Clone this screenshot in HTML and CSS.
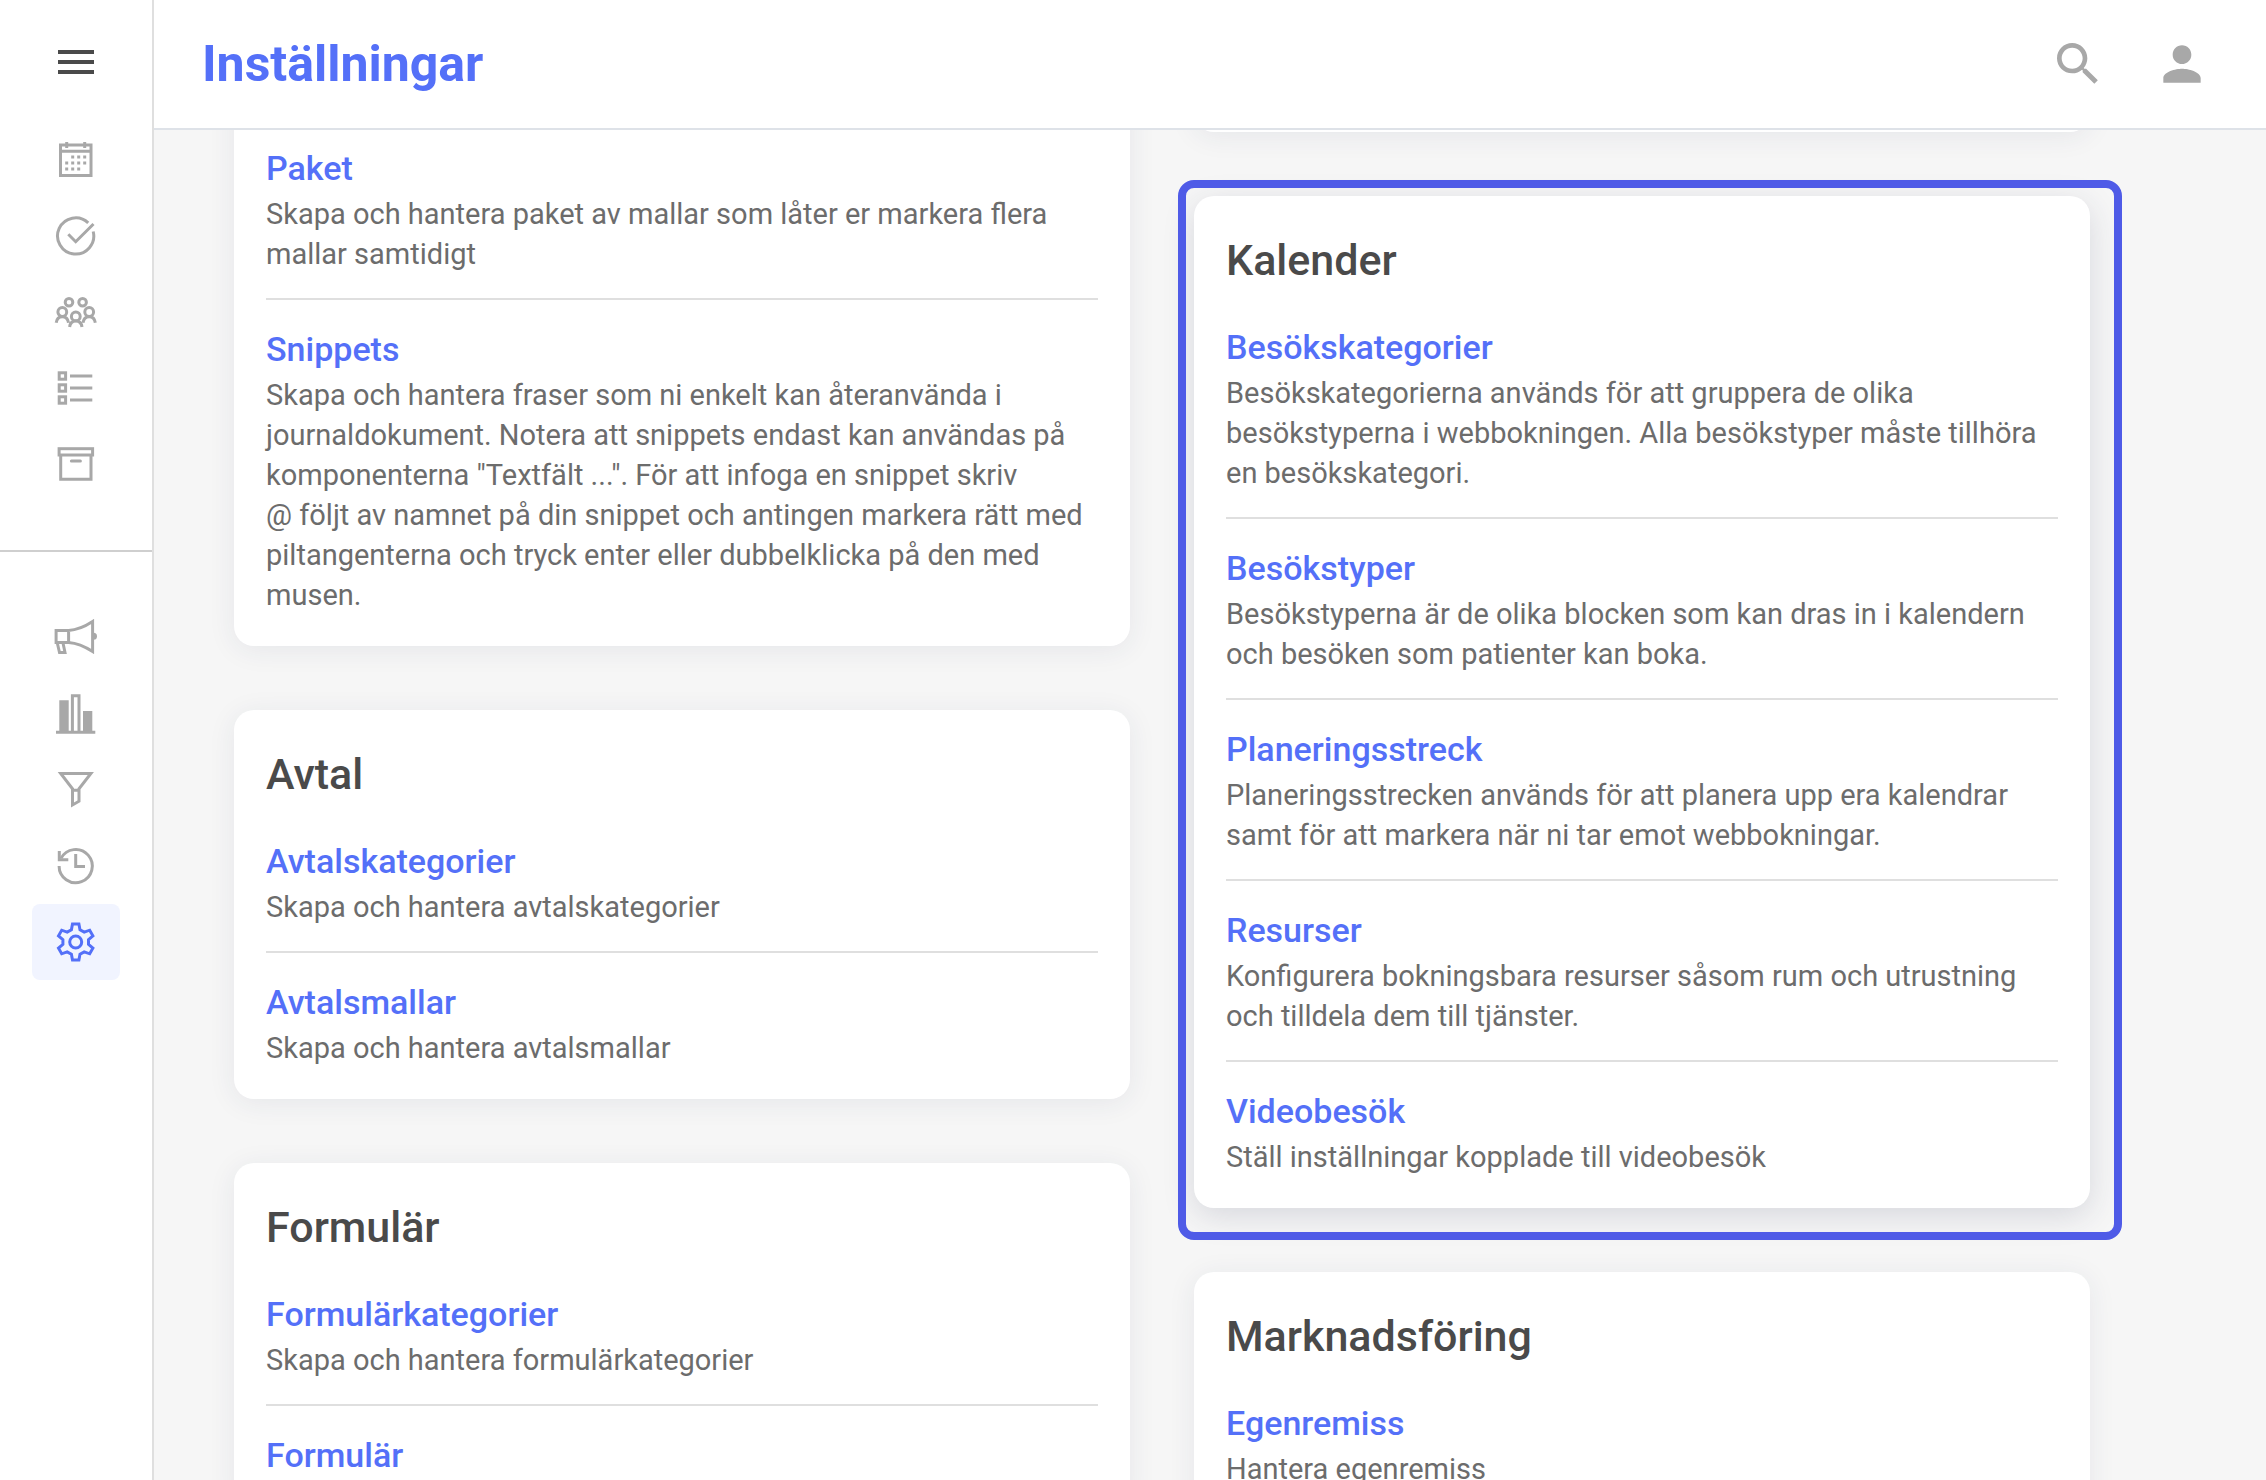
FILE: index.html
```html
<!DOCTYPE html>
<html lang="sv">
<head>
  <meta charset="UTF-8">
  <meta name="viewport" content="width=device-width, initial-scale=1">
  <title>Inställningar</title>
  <link rel="stylesheet" href="styles.css">
</head>
<body>
  <nav class="sidebar">
    <button class="menu-button" type="button" aria-label="Meny">
      <svg class="icon" viewBox="0 0 24 24"><path fill="currentColor" d="M3 18h18v-2H3v2zm0-5h18v-2H3v2zm0-7v2h18V6H3z"/></svg>
    </button>

    <div class="nav-group">
      <a class="nav-item" href="#" aria-label="Kalender">
        <svg class="icon line" viewBox="0 0 48 48">
          <rect x="8.5" y="9" width="30.5" height="30.5"/>
          <path d="M8.5 15.2H39M14.7 6v6M32.7 6v6"/>
          <path stroke-dasharray="3 3" d="M19.2 21h15M13.2 27h21M13.2 33h15"/>
        </svg>
      </a>
      <a class="nav-item" href="#" aria-label="Uppgifter">
        <svg class="icon line" viewBox="0 0 48 48">
          <path d="M36.2 10.9A18.1 18.1 0 1 0 41.2 19.5"/>
          <path d="M16.3 22.3l7.4 7.4L41.5 12"/>
        </svg>
      </a>
      <a class="nav-item" href="#" aria-label="Patienter">
        <svg class="icon line" viewBox="0 0 48 48">
          <circle cx="17" cy="14.3" r="3.8"/>
          <circle cx="30.6" cy="14.3" r="3.8"/>
          <circle cx="10.3" cy="24" r="4.4"/>
          <circle cx="37.2" cy="24" r="4.4"/>
          <circle cx="23.8" cy="28.4" r="4.4"/>
          <path d="M4.2 34.7c.5-3.7 2.8-6 6.1-6s5.7 2.3 6.2 6M31 34.7c.5-3.7 2.9-6 6.2-6s5.6 2.3 6.1 6M17.6 39c.5-3.7 2.9-6 6.2-6s5.7 2.3 6.2 6"/>
        </svg>
      </a>
      <a class="nav-item" href="#" aria-label="Listor">
        <svg class="icon line" viewBox="0 0 48 48">
          <rect x="7.2" y="8.8" width="6.4" height="6.4"/>
          <rect x="7.2" y="20.8" width="6.4" height="6.4"/>
          <rect x="7.2" y="32.8" width="6.4" height="6.4"/>
          <path d="M18 12h22.3M18 24h22.3M18 36h22.3"/>
        </svg>
      </a>
      <a class="nav-item" href="#" aria-label="Arkiv">
        <svg class="icon line" viewBox="0 0 48 48">
          <rect x="7.1" y="8.7" width="33.5" height="6.3"/>
          <path d="M8.7 15v24.3H39V15"/>
          <path stroke-linecap="round" d="M19.4 21h9"/>
        </svg>
      </a>
    </div>

    <div class="nav-group nav-group-bottom">
      <a class="nav-item" href="#" aria-label="Marknadsföring">
        <svg class="icon line" viewBox="0 0 48 48">
          <path d="M4.1 16.4h12.5v12H4.1zM16.6 16.4C25 16 33 12.5 40.6 7.5v30C33 32.5 25 29 16.6 28.4M5.3 29l2.2 9.5h5.5L11 29"/>
          <path class="solid" d="M41.5 18.8a3.5 3.5 0 0 1 0 7z"/>
        </svg>
      </a>
      <a class="nav-item" href="#" aria-label="Statistik">
        <svg class="icon line" viewBox="0 0 48 48">
          <path class="solid" d="M7.3 10.3h9.4V42H7.3zM31 21h9.3v21H31z"/>
          <path d="M20.4 42V5.7H27V42M4 42.2h39.3"/>
        </svg>
      </a>
      <a class="nav-item" href="#" aria-label="Filter">
        <svg class="icon line" viewBox="0 0 48 48">
          <path d="M8.7 7.4h30.2L27 22.8v12.4L20.5 39V22.8L8.7 7.4zM20.5 24.3H27"/>
        </svg>
      </a>
      <a class="nav-item" href="#" aria-label="Historik">
        <svg class="icon line" viewBox="0 0 48 48">
          <path d="M7.1 24A16.6 16.6 0 1 0 9 16.4"/>
          <path d="M7.3 9v8.7h9M23.7 12v12.5H33"/>
        </svg>
      </a>
      <a class="nav-item active" href="#" aria-label="Inställningar">
        <svg class="icon line" viewBox="0 0 48 48">
          <path transform="translate(23.7 24)" d="M-3.2-18H3.2L4.3-12.3 8.5-9.9 14-11.8 17.2-6.2 12.8-2.4V2.4L17.2 6.2 14 11.8 8.5 9.9 4.3 12.3 3.2 18H-3.2L-4.3 12.3-8.5 9.9-14 11.8-17.2 6.2-12.8 2.4V-2.4L-17.2-6.2-14-11.8-8.5-9.9-4.3-12.3z"/>
          <circle cx="23.7" cy="24" r="6"/>
        </svg>
      </a>
    </div>
  </nav>

  <div class="page">
    <header class="topbar">
      <h1>Inställningar</h1>
      <div class="topbar-actions">
        <button type="button" aria-label="Sök">
          <svg viewBox="0 0 24 24"><path fill="currentColor" d="M15.5 14h-.79l-.28-.27C15.41 12.59 16 11.11 16 9.5 16 5.91 13.09 3 9.5 3S3 5.91 3 9.5 5.91 16 9.5 16c1.61 0 3.09-.59 4.23-1.57l.27.28v.79l5 4.99L20.49 19l-4.99-5zm-6 0C7.01 14 5 11.99 5 9.5S7.01 5 9.5 5 14 7.01 14 9.5 11.99 14 9.5 14z"/></svg>
        </button>
        <button type="button" aria-label="Konto">
          <svg viewBox="0 0 24 24"><path fill="currentColor" d="M12 12c2.21 0 4-1.79 4-4s-1.79-4-4-4-4 1.79-4 4 1.79 4 4 4zm0 2c-2.67 0-8 1.34-8 4v2h16v-2c0-2.66-5.33-4-8-4z"/></svg>
        </button>
      </div>
    </header>

    <main class="content">
      <div class="columns">
        <div class="column">
          <section class="card">
            <div class="entry">
              <a href="#">Paket</a>
              <p>Skapa och hantera paket av mallar som låter er markera flera<br>mallar samtidigt</p>
            </div>
            <div class="entry">
              <a href="#">Snippets</a>
              <p>Skapa och hantera fraser som ni enkelt kan återanvända i<br>journaldokument. Notera att snippets endast kan användas på<br>komponenterna "Textfält ...". För att infoga en snippet skriv<br>@ följt av namnet på din snippet och antingen markera rätt med<br>piltangenterna och tryck enter eller dubbelklicka på den med<br>musen.</p>
            </div>
          </section>

          <section class="card">
            <h2>Avtal</h2>
            <div class="entry">
              <a href="#">Avtalskategorier</a>
              <p>Skapa och hantera avtalskategorier</p>
            </div>
            <div class="entry">
              <a href="#">Avtalsmallar</a>
              <p>Skapa och hantera avtalsmallar</p>
            </div>
          </section>

          <section class="card">
            <h2>Formulär</h2>
            <div class="entry">
              <a href="#">Formulärkategorier</a>
              <p>Skapa och hantera formulärkategorier</p>
            </div>
            <div class="entry">
              <a href="#">Formulär</a>
            </div>
          </section>
        </div>

        <div class="column">
          <section class="card card-end"></section>

          <section class="card highlighted">
            <h2>Kalender</h2>
            <div class="entry">
              <a href="#">Besökskategorier</a>
              <p>Besökskategorierna används för att gruppera de olika<br>besökstyperna i webbokningen. Alla besökstyper måste tillhöra<br>en besökskategori.</p>
            </div>
            <div class="entry">
              <a href="#">Besökstyper</a>
              <p>Besökstyperna är de olika blocken som kan dras in i kalendern<br>och besöken som patienter kan boka.</p>
            </div>
            <div class="entry">
              <a href="#">Planeringsstreck</a>
              <p>Planeringsstrecken används för att planera upp era kalendrar<br>samt för att markera när ni tar emot webbokningar.</p>
            </div>
            <div class="entry">
              <a href="#">Resurser</a>
              <p>Konfigurera bokningsbara resurser såsom rum och utrustning<br>och tilldela dem till tjänster.</p>
            </div>
            <div class="entry">
              <a href="#">Videobesök</a>
              <p>Ställ inställningar kopplade till videobesök</p>
            </div>
          </section>

          <section class="card">
            <h2>Marknadsföring</h2>
            <div class="entry">
              <a href="#">Egenremiss</a>
              <p>Hantera egenremiss</p>
            </div>
          </section>
        </div>
      </div>
    </main>
  </div>
</body>
</html>
```
FILE: styles.css
```css
* {
  box-sizing: border-box;
}

body {
  font-family: Roboto, "Liberation Sans", sans-serif;
  margin: 0;
  display: flex;
  height: 100vh;
  overflow: hidden;
  background-color: #f6f6f6;
  color: #4a4a4a;
}

h1, h2, p {
  margin: 0;
}

a {
  text-decoration: none;
}

button {
  display: flex;
  padding: 0;
  border: none;
  background: none;
  color: inherit;
  cursor: pointer;
}

/* Sidebar */
.sidebar {
  flex: none;
  width: 154px;
  padding-top: 38px;
  border-right: 2px solid #dfdfdf;
  background-color: #fff;
}

.menu-button {
  margin: 0 auto 36px;
}

.icon {
  display: block;
  width: 48px;
  height: 48px;
}

.line {
  fill: none;
  stroke: currentColor;
  stroke-width: 3;
}

.solid {
  fill: currentColor;
  stroke: none;
}

.nav-group {
  display: flex;
  flex-direction: column;
  align-items: center;
  padding-bottom: 48px;
}

.nav-group-bottom {
  padding-top: 48px;
  border-top: 2px solid #cfcfcf;
}

.nav-item {
  display: flex;
  align-items: center;
  justify-content: center;
  width: 88px;
  height: 76px;
  border-radius: 8px;
  color: #a8a8a8;
}

.nav-item.active {
  background-color: #f1f4ff;
  color: #5470f8;
}

/* Top bar */
.page {
  flex: 1;
  min-width: 0;
  display: flex;
  flex-direction: column;
}

.topbar {
  flex: none;
  display: flex;
  align-items: center;
  justify-content: space-between;
  height: 130px;
  padding: 0 56px 0 48px;
  border-bottom: 2px solid #dee2e8;
  background-color: #fff;
}

.topbar h1 {
  font-size: 50px;
  font-weight: 700;
  line-height: 64px;
  color: #5470f8;
}

.topbar-actions {
  display: flex;
  gap: 48px;
  color: #a8a8a8;
}

.topbar-actions svg {
  width: 56px;
  height: 56px;
}

/* Settings cards */
.content {
  flex: 1;
  min-height: 0;
  overflow: hidden;
}

/* list is scrolled partly under the top bar */
.columns {
  display: flex;
  gap: 64px;
  margin-top: -43px;
  padding: 0 176px 0 80px;
}

.column {
  flex: 1;
  min-width: 0;
  display: flex;
  flex-direction: column;
  gap: 64px;
}

.card {
  padding: 32px 32px 7px;
  border-radius: 20px;
  background-color: #fff;
  box-shadow: 0 4px 28px rgba(40, 50, 90, 0.08);
}

.card-end {
  height: 45px;
}

.card h2 {
  margin-bottom: 6px;
  font-size: 43px;
  font-weight: 500;
  line-height: 64px;
}

.entry {
  padding: 24px 0;
}

.entry + .entry {
  border-top: 2px solid #dfdfdf;
}

.entry a {
  display: block;
  font-size: 34px;
  font-weight: 500;
  line-height: 51px;
  color: #5470f8;
}

.entry p {
  font-size: 29px;
  line-height: 40px;
  color: #6c6c6c;
  white-space: nowrap;
}

.highlighted {
  position: relative;
  box-shadow: 0 8px 32px rgba(40, 50, 90, 0.15);
}

.highlighted::after {
  content: "";
  position: absolute;
  top: -16px;
  right: -32px;
  bottom: -32px;
  left: -16px;
  border: 8px solid #4f5be7;
  border-radius: 16px;
  pointer-events: none;
}
```
